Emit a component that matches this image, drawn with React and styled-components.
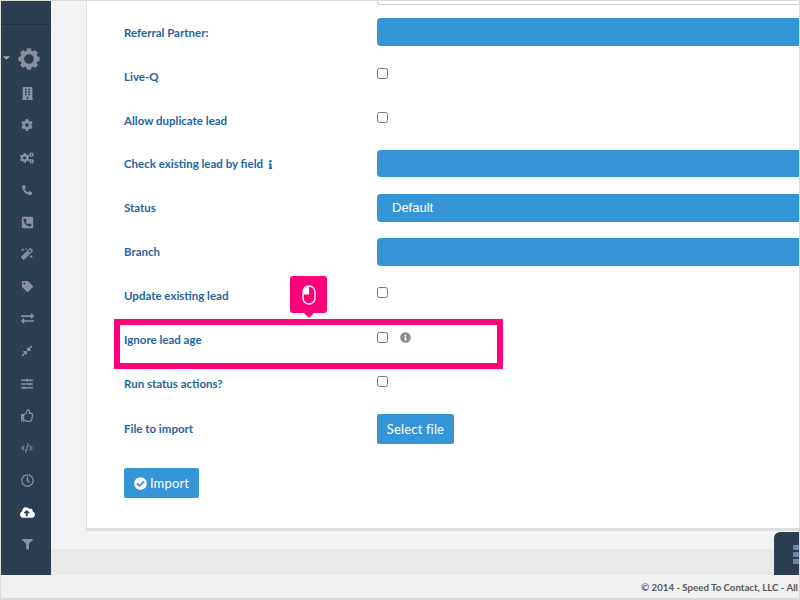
import React from "react";
import styled, { createGlobalStyle } from "styled-components";
import { FaCog, FaBuilding, FaCogs, FaPhoneAlt, FaPhoneSquareAlt, FaMagic, FaTag, FaExchangeAlt, FaCompressAlt, FaSlidersH, FaRegThumbsUp, FaCode, FaRegClock, FaCloudUploadAlt, FaFilter, FaInfo, FaInfoCircle, FaCheckCircle, FaCaretDown } from "react-icons/fa";

const Global = createGlobalStyle`
  html, body { margin: 0; padding: 0; overflow: hidden; }
  body { font-family: Lato, "Liberation Sans", sans-serif; }
  * { box-sizing: border-box; }
`;

const Page = styled.div`
  position: relative;
  width: 800px;
  height: 600px;
  overflow: hidden;
  display: flex;
  flex-direction: column;
  background: #f2f3f5;
  border-top: 1px solid #dcdcdc;
  border-left: 1px solid #dcdcdc;
  border-right: 1px solid #dcdcdc;
  border-bottom: 2px solid #d8d8d8;
`;
const Body = styled.div`
  display: flex;
  height: 574px;
`;
const Sidebar = styled.nav`
  width: 50px;
  flex: none;
  background: #2c3e50;
  display: flex;
  flex-direction: column;
`;
const SideTop = styled.div`
  height: 24px;
  margin-right: 2px;
  border-bottom: 1px solid #222f3d;
`;
const GearRow = styled.div`
  height: 52px;
  position: relative;
  display: flex;
  align-items: flex-start;
  justify-content: center;
  padding: 23px 0 0 6px;
`;
const Caret = styled.span`
  position: absolute;
  left: 0;
  top: 27px;
  display: flex;
  font-size: 11px;
  color: #a4a9b2;
`;
const SideItem = styled.div`
  height: 32.28px;
  flex: none;
  display: flex;
  align-items: center;
  justify-content: center;
  padding-left: 2px;
  font-size: ${p => p.$size || 12}px;
  color: ${p => (p.$active ? "#ffffff" : p.$dim ? "#727b8a" : "#8a919d")};
`;
const Main = styled.div`
  flex: 1;
  min-width: 0;
  display: flex;
  flex-direction: column;
`;
const PanelWrap = styled.div`
  height: 548px;
  padding-left: 35px;
`;
const Panel = styled.section`
  height: 530px;
  background: #fff;
  border-left: 1px solid #e0e0e0;
  border-bottom: 3px solid #dedede;
  padding-left: 37px;
`;
const TopField = styled.div`
  height: 4px;
  margin: 0 0 13px 253px;
  background: #fff;
  border: 1px solid #cfcfcf;
  border-top: 0;
  border-right: 0;
  border-radius: 0 0 0 3px;
`;
const Row = styled.div`
  display: flex;
  height: ${p => p.$h || 28}px;
  margin-bottom: ${p => (p.$mb === undefined ? 16 : p.$mb)}px;
`;
const Label = styled.div`
  width: 253px;
  flex: none;
  padding-top: ${p => p.$top ?? 6}px;
  font-size: 11.5px;
  line-height: 16px;
  font-weight: 700;
  color: #1f659b;
  white-space: nowrap;
`;
const Select = styled.div`
  flex: 1;
  height: ${p => p.$h || 28}px;
  background: #3695d6;
  border-radius: 4px 0 0 4px;
  color: #fff;
  font: 13px/27px "Liberation Sans", sans-serif;
  padding-left: 15px;
`;
const CheckCell = styled.div`
  display: flex;
  align-items: flex-start;
  padding-top: ${p => p.$top ?? 6}px;
`;
const Check = styled.input.attrs({ type: "checkbox" })`
  margin: 0;
  width: 11px;
  height: 11px;
`;
const HelpIcon = styled.span`
  display: flex;
  margin-left: 12px;
  color: #8e8e8e;
  font-size: 11px;
`;
const InfoMark = styled(FaInfo)`
  font-size: 9px;
  margin-left: 3px;
  vertical-align: -1px;
`;
const Button = styled.button`
  height: 30px;
  width: ${p => p.$w}px;
  border: 0;
  border-radius: 2px;
  background: #3695d6;
  color: #fff;
  padding: 0;
  font: 13px Lato, sans-serif;
  letter-spacing: 0.15px;
  display: inline-flex;
  align-items: center;
  justify-content: center;
  gap: 3px;
`;
const Strip = styled.div`
  flex: 1;
  background: #e9e9e9;
`;
const Footer = styled.footer`
  flex: 1;
  background: #f0f0f0;
  display: flex;
  align-items: center;
  justify-content: flex-end;
  padding-right: 1px;
  overflow: hidden;
  white-space: nowrap;
  font-size: 9.7px;
  font-weight: 700;
  color: #595959;
`;
const Highlight = styled.div`
  position: absolute;
  left: 113px;
  top: 318px;
  width: 389px;
  height: 50px;
  border: 6px solid #ff0078;
  pointer-events: none;
`;
const Tip = styled.div`
  position: absolute;
  left: 289px;
  top: 275px;
  width: 37px;
  height: 37px;
  background: #ff0078;
  border-radius: 3px;
  display: flex;
  align-items: center;
  justify-content: center;
  &::after {
    content: "";
    position: absolute;
    left: 14px;
    bottom: -5px;
    border: 5px solid transparent;
    border-bottom: 0;
    border-top-color: #ff0078;
  }
`;
const Floating = styled.div`
  position: absolute;
  left: 773px;
  top: 531px;
  width: 40px;
  height: 43px;
  background: #2c3e50;
  border-radius: 6px 0 0 0;
  padding: 13px 0 0 19px;
  display: flex;
  flex-direction: column;
  gap: 2px;
`;
const Bar = styled.span`
  display: block;
  width: 14px;
  height: 5px;
  border-radius: 1px;
  background: #6e85a3;
`;

const MouseIcon = () => (
  <svg width="14" height="20" viewBox="0 0 14 20" fill="none">
    <rect x="1" y="1" width="12" height="18" rx="6" stroke="#fff" strokeWidth="1.4" />
    <path d="M7 1.5 A5.5 5.5 0 0 0 1.6 7 V9.5 H7 Z" fill="#fff" />
  </svg>
);

const BigGear = () => (
  <svg width="22" height="22" viewBox="0 0 22 22" fill="none">
    <circle cx="11" cy="11" r="6.8" stroke="#8a919d" strokeWidth="4" />
    {[0, 45, 90, 135, 180, 225, 270, 315].map(a => (
      <rect key={a} x="8.8" y="0.4" width="4.4" height="4" fill="#8a919d" transform={`rotate(${a} 11 11)`} />
    ))}
  </svg>
);

const icons = [
  [FaBuilding, 13], [FaCog, 12], [FaCogs, 14], [FaPhoneAlt, 10], [FaPhoneSquareAlt, 13],
  [FaMagic, 12], [FaTag, 11], [FaExchangeAlt, 13], [FaCompressAlt, 12], [FaSlidersH, 12],
  [FaRegThumbsUp, 13], [FaCode, 12, true], [FaRegClock, 13], [FaCloudUploadAlt, 15], [FaFilter, 11],
];

export default function App() {
  return (
    <Page>
      <Global />
      <Body>
        <Sidebar>
          <SideTop />
          <GearRow><Caret><FaCaretDown /></Caret><BigGear /></GearRow>
          {icons.map(([I, s, dim], i) => (
            <SideItem key={i} $size={s} $dim={dim} $active={i === 13}><I /></SideItem>
          ))}
        </Sidebar>
        <Main>
          <PanelWrap>
            <Panel>
              <TopField />
              <Row><Label $top={7}>Referral Partner:</Label><Select /></Row>
              <Row><Label $top={7}>Live-Q</Label><CheckCell><Check /></CheckCell></Row>
              <Row><Label $top={7}>Allow duplicate lead</Label><CheckCell><Check /></CheckCell></Row>
              <Row><Label>Check existing lead by field<InfoMark /></Label><Select $h={27} /></Row>
              <Row><Label>Status</Label><Select>Default</Select></Row>
              <Row><Label>Branch</Label><Select /></Row>
              <Row><Label>Update existing lead</Label><CheckCell $top={5}><Check /></CheckCell></Row>
              <Row><Label>Ignore lead age</Label><CheckCell $top={6}><Check /><HelpIcon><FaInfoCircle /></HelpIcon></CheckCell></Row>
              <Row><Label>Run status actions?</Label><CheckCell $top={6}><Check /></CheckCell></Row>
              <Row $h={30} $mb={24}><Label $top={7}>File to import</Label><Button $w={77}>Select file</Button></Row>
              <Row $h={30}><Button $w={75}><FaCheckCircle />Import</Button></Row>
            </Panel>
          </PanelWrap>
          <Strip />
        </Main>
      </Body>
      <Footer>© 2014 - Speed To Contact, LLC - All</Footer>
      <Highlight />
      <Tip><MouseIcon /></Tip>
      <Floating><Bar /><Bar /><Bar /></Floating>
    </Page>
  );
}
